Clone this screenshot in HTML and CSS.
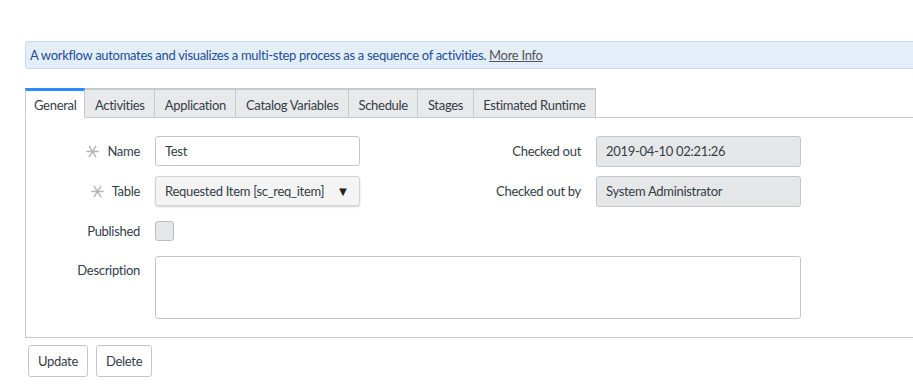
FILE: index.html
```html
<!DOCTYPE html>
<html>
<head>
<meta charset="utf-8">
<link rel="stylesheet" href="styles.css">
</head>
<body>
<div class="page">
  <div class="info">A workflow automates and visualizes a multi-step process as a sequence of activities. <a class="more" href="#">More Info</a></div>

  <div class="tabs">
    <div class="tab active">General</div>
    <div class="tab">Activities</div>
    <div class="tab">Application</div>
    <div class="tab">Catalog Variables</div>
    <div class="tab">Schedule</div>
    <div class="tab">Stages</div>
    <div class="tab">Estimated Runtime</div>
    <div class="tab-fill"></div>
  </div>

  <div class="panel">
    <div class="form">
      <label class="lbl"><svg class="req" viewBox="0 0 12 12" width="13" height="13"><g stroke="#b5b5b5" stroke-width="1.3" stroke-linecap="round"><line x1="0.8" y1="6" x2="11.2" y2="6"/><line x1="3" y1="1.2" x2="9" y2="10.8"/><line x1="9" y1="1.2" x2="3" y2="10.8"/></g></svg>Name</label>
      <div class="field"><input class="input" type="text" value="Test"></div>
      <label class="lbl">Checked out</label>
      <div class="field"><div class="input ro">2019-04-10 02:21:26</div></div>

      <label class="lbl"><svg class="req" viewBox="0 0 12 12" width="13" height="13"><g stroke="#b5b5b5" stroke-width="1.3" stroke-linecap="round"><line x1="0.8" y1="6" x2="11.2" y2="6"/><line x1="3" y1="1.2" x2="9" y2="10.8"/><line x1="9" y1="1.2" x2="3" y2="10.8"/></g></svg>Table</label>
      <div class="field"><div class="select"><span>Requested Item [sc_req_item]</span><span class="arrow">▼</span></div></div>
      <label class="lbl">Checked out by</label>
      <div class="field"><div class="input ro">System Administrator</div></div>

      <label class="lbl">Published</label>
      <div class="field"><span class="check"></span></div>
      <div></div><div></div>

      <label class="lbl top">Description</label>
      <div class="field wide"><div class="textarea"></div></div>
    </div>
  </div>

  <div class="buttons">
    <button class="btn">Update</button>
    <button class="btn">Delete</button>
  </div>
</div>
</body>
</html>
```

FILE: styles.css
```css
html, body {
  margin: 0;
  padding: 0;
  background: #fff;
  overflow: hidden;
}
body {
  font-family: Lato, "Liberation Sans", sans-serif;
  font-size: 13px;
  letter-spacing: -0.3px;
  color: #343d47;
}
.page {
  padding: 41px 0 0 25px;
}
.info {
  height: 26px;
  line-height: 26px;
  background: #e4eef9;
  border: 1px solid #c8dbf0;
  border-right: none;
  border-radius: 3px 0 0 3px;
  padding-left: 4px;
  color: #1c4f94;
  white-space: nowrap;
}
.more {
  color: #555;
  text-decoration: underline;
}
.tabs {
  display: flex;
  margin-top: 19px;
  height: 30px;
}
.tab {
  box-sizing: border-box;
  height: 30px;
  line-height: 30px;
  padding: 0 9.5px;
  background: #e8e9ea;
  border: 1px solid #c9c9c9;
  border-left: none;
  border-top: 2px solid #c9c9c9;
  color: #343d47;
  white-space: nowrap;
}
.tab:first-child {
  border-left: 1px solid #c9c9c9;
  padding: 0 8px;
}
.tab.active {
  background: #fff;
  border-top: 3px solid #278efc;
  border-bottom-color: #fff;
  line-height: 29px;
}
.tab-fill {
  flex: 1;
  border-bottom: 1px solid #c9c9c9;
}
.panel {
  border-left: 1px solid #c9c9c9;
  border-bottom: 1px solid #c9c9c9;
  padding: 18px 0 18px 0;
}
.form {
  display: grid;
  grid-template-columns: 114px 205px 206px 205px;
  grid-template-rows: 30px 30px 30px 63px;
  column-gap: 15px;
  row-gap: 10px;
}
.lbl {
  display: flex;
  align-items: center;
  justify-content: flex-end;
  color: #343d47;
  white-space: nowrap;
}
.lbl.top {
  align-items: flex-start;
  padding-top: 6px;
}
.req {
  margin-right: 8px;
}
.field {
  display: flex;
  align-items: center;
}
.field.wide {
  grid-column: 2 / 5;
  align-items: stretch;
}
.input {
  box-sizing: border-box;
  width: 205px;
  height: 30px;
  border: 1px solid #c5c6c8;
  border-radius: 3px;
  padding: 0 9px;
  font: inherit;
  letter-spacing: inherit;
  color: #343d47;
  background: #fff;
  line-height: 28px;
  outline: none;
}
.input.ro {
  background: #e6e7e8;
  border-color: #c5c6c8;
  height: 31px;
  line-height: 29px;
}
.select {
  box-sizing: border-box;
  width: 205px;
  height: 30px;
  border: 1px solid #d2d3d4;
  border-radius: 3px;
  background: #f4f4f4;
  box-shadow: 0 1px 2px rgba(0,0,0,0.18);
  display: flex;
  align-items: center;
  justify-content: space-between;
  padding: 0 10px 0 9px;
  color: #343d47;
}
.arrow {
  font-size: 13px;
  color: #222;
}
.check {
  display: block;
  box-sizing: border-box;
  width: 19px;
  height: 20px;
  border: 1px solid #bcbdbe;
  border-radius: 3px;
  background: #e6e7e8;
}
.textarea {
  flex: 1;
  border: 1px solid #c5c6c8;
  border-radius: 3px;
  background: #fff;
}
.buttons {
  display: flex;
  gap: 8px;
  margin: 7px 0 0 3px;
}
.btn {
  box-sizing: border-box;
  height: 32px;
  padding: 0 9px;
  background: #fff;
  border: 1px solid #c5c6c8;
  border-radius: 3px;
  font: inherit;
  letter-spacing: inherit;
  color: #343d47;
}
```
